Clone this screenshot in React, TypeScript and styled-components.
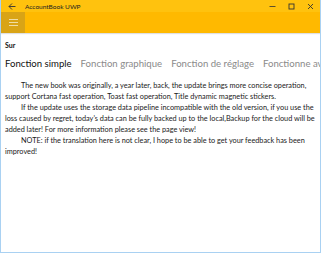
import React from 'react';
import styled, { createGlobalStyle } from 'styled-components';

const GlobalStyle = createGlobalStyle`
  html, body {
    margin: 0;
    padding: 0;
    background: #ffffff;
  }
  body {
    font-family: 'Lato', 'Noto Sans', sans-serif;
  }
`;

const Window = styled.div`
  width: 321px;
  height: 253px;
  box-sizing: border-box;
  border: 1px solid #a9d1f2;
  border-top: none;
  display: flex;
  flex-direction: column;
  overflow: hidden;
  background: #ffffff;
`;

const TitleBar = styled.div`
  height: 12px;
  background: #ffc20e;
  display: flex;
  align-items: center;
`;

const BackButton = styled.div`
  width: 20px;
  display: flex;
  justify-content: center;
  margin-left: 1px;
`;

const TitleText = styled.span`
  font-size: 6.5px;
  color: #222;
  margin-left: 3px;
  flex: 1;
`;

const CaptionButton = styled.div`
  width: 19px;
  display: flex;
  justify-content: center;
  align-items: center;
`;

const AppBar = styled.div`
  height: 21px;
  background: #ffb900;
  box-shadow: 0 1px 1px rgba(0, 0, 0, 0.12);
  display: flex;
`;

const MenuButton = styled.div`
  width: 24px;
  height: 21px;
  background: #d9a416;
  display: flex;
  align-items: center;
  justify-content: center;
`;

const Content = styled.div`
  padding: 0 4px;
  flex: 1;
  overflow: hidden;
`;

const PageTitle = styled.div`
  font-weight: 700;
  font-size: 7px;
  color: #111;
  margin-top: 7px;
  height: 10px;
  line-height: 10px;
`;

const PivotRow = styled.div`
  display: flex;
  white-space: nowrap;
  margin-top: 6px;
  gap: 9px;
  height: 16px;
`;

const PivotHeader = styled.span<{ $active?: boolean }>`
  font-size: 9.6px;
  line-height: 16px;
  color: ${(p) => (p.$active ? '#111' : '#8a8a8a')};
`;

const Body = styled.div`
  margin-top: 8px;
  font-size: 7.3px;
  line-height: 11px;
  color: #1a1a1a;
  padding-right: 1px;
`;

const Para = styled.p`
  margin: 0;
  text-indent: 16px;
`;

const App = () => {
  return (
    <>
      <GlobalStyle />
      <Window>
        <TitleBar>
          <BackButton>
            <svg width="8" height="7" viewBox="0 0 8 7">
              <path d="M4 0.5 L1 3.5 L4 6.5 M1 3.5 H7.5" stroke="#333" strokeWidth="0.9" fill="none" />
            </svg>
          </BackButton>
          <TitleText>AccountBook UWP</TitleText>
          <CaptionButton>
            <svg width="7" height="7" viewBox="0 0 7 7">
              <path d="M0.5 3.5 H6.5" stroke="#333" strokeWidth="0.8" />
            </svg>
          </CaptionButton>
          <CaptionButton>
            <svg width="7" height="7" viewBox="0 0 7 7">
              <rect x="1" y="1" width="5" height="5" stroke="#333" strokeWidth="0.9" fill="none" />
            </svg>
          </CaptionButton>
          <CaptionButton>
            <svg width="7" height="7" viewBox="0 0 7 7">
              <path d="M1 1 L6 6 M6 1 L1 6" stroke="#333" strokeWidth="0.9" />
            </svg>
          </CaptionButton>
        </TitleBar>
        <AppBar>
          <MenuButton>
            <svg width="9" height="7" viewBox="0 0 9 7">
              <path d="M0 0.5 H9 M0 3.5 H9 M0 6.5 H9" stroke="#f3e3b5" strokeWidth="0.9" />
            </svg>
          </MenuButton>
        </AppBar>
        <Content>
          <PageTitle>Sur</PageTitle>
          <PivotRow>
            <PivotHeader $active>Fonction simple</PivotHeader>
            <PivotHeader>Fonction graphique</PivotHeader>
            <PivotHeader>Fonction de réglage</PivotHeader>
            <PivotHeader>Fonctionne avancée</PivotHeader>
          </PivotRow>
          <Body>
            <Para>
              The new book was originally, a year later, back, the update brings more concise operation,
              support Cortana fast operation, Toast fast operation, Title dynamic magnetic stickers.
            </Para>
            <Para>
              If the update uses the storage data pipeline incompatible with the old version, if you use the
              loss caused by regret, today's data can be fully backed up to the local,Backup for the cloud will be
              added later! For more information please see the page view!
            </Para>
            <Para>
              NOTE: if the translation here is not clear, I hope to be able to get your feedback has been
              improved!
            </Para>
          </Body>
        </Content>
      </Window>
    </>
  );
};

export default App;
